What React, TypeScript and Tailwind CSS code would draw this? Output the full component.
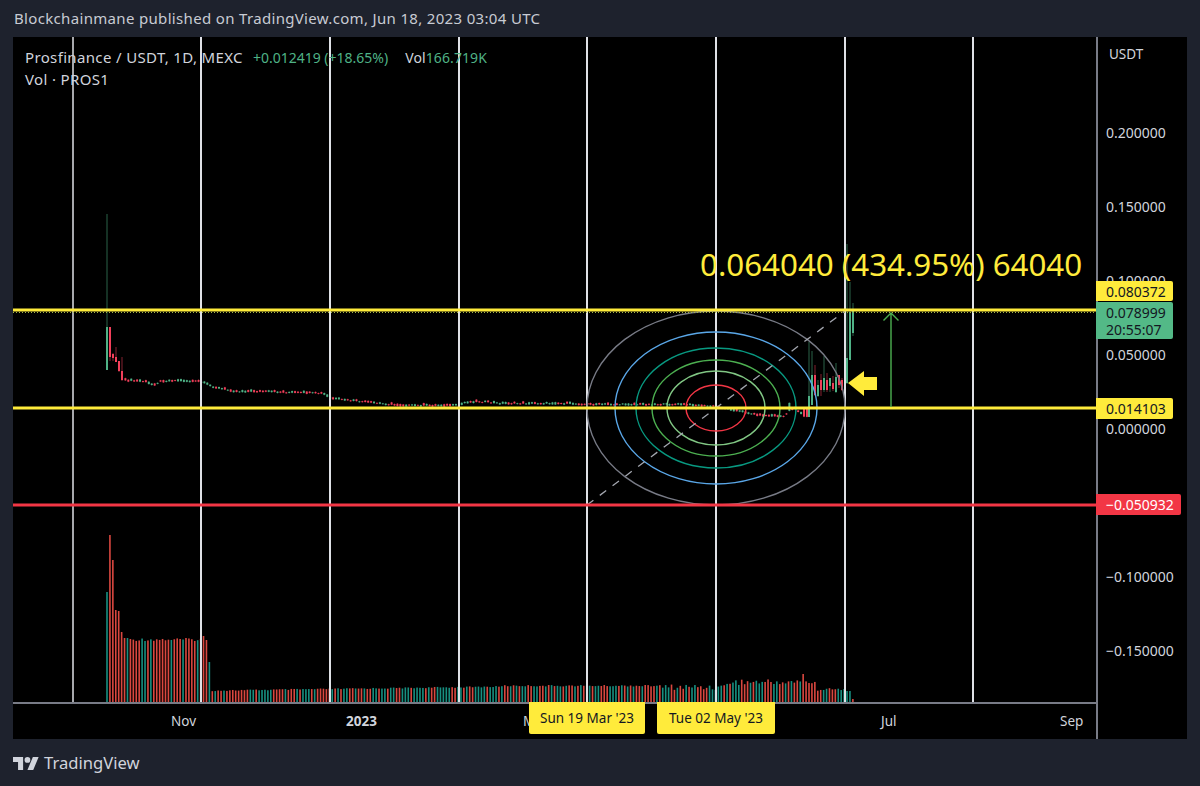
const font = { fontFamily: "'Noto Sans', sans-serif" }

const gridXs = [73, 201, 330, 459, 587, 716, 845, 973]

const priceTicks = [
  { label: '0.200000', y: 133 },
  { label: '0.150000', y: 207 },
  { label: '0.100000', y: 281 },
  { label: '0.050000', y: 355 },
  { label: '0.000000', y: 429 },
  { label: '−0.100000', y: 577 },
  { label: '−0.150000', y: 651 },
]

const ellipses = [
  { rx: 129, ry: 97, stroke: '#787b86' },
  { rx: 101, ry: 76, stroke: '#5aa7e8' },
  { rx: 80, ry: 60, stroke: '#089981' },
  { rx: 64, ry: 48, stroke: '#4caf50' },
  { rx: 49, ry: 37, stroke: '#81c784' },
  { rx: 30, ry: 23, stroke: '#f23645' },
]

const STEP = 2.925
const START = 107

function noise(i: number) {
  const v = Math.sin(i * 12.9898) * 43758.5453
  return v - Math.floor(v)
}

// x, y of the close along the flat part of the chart
const closePath = [
  [125, 381], [145, 382], [150, 385], [155, 385], [160, 382], [175, 381], [190, 382], [200, 382], [207, 385],
  [215, 388], [225, 390], [235, 392], [260, 392], [290, 393], [323, 394], [330, 399], [350, 401], [400, 406],
  [460, 406], [465, 403], [480, 402], [500, 404], [560, 404], [590, 405], [680, 405], [716, 407], [735, 411],
  [760, 416], [785, 417], [790, 410], [795, 409], [806, 418],
]

function closeAt(x: number) {
  for (let i = 1; i < closePath.length; i++) {
    const [x0, y0] = closePath[i - 1]
    const [x1, y1] = closePath[i]
    if (x <= x1) return y0 + ((y1 - y0) * (x - x0)) / (x1 - x0)
  }
  return 417
}

type Candle = { x: number; top: number; bottom: number; high: number; low: number; up: boolean }

const headCandles: Candle[] = [
  { x: 107, top: 327, bottom: 370, high: 214, low: 370, up: true },
  { x: 110, top: 327, bottom: 357, high: 327, low: 361, up: false },
  { x: 113, top: 354, bottom: 358, high: 353, low: 361, up: false },
  { x: 116, top: 357, bottom: 362, high: 347, low: 362, up: false },
  { x: 119, top: 361, bottom: 371, high: 361, low: 372, up: false },
  { x: 122, top: 371, bottom: 380, high: 357, low: 381, up: false },
]

const flatCandles: Candle[] = []
for (let x = 125.4, i = 0; x < 807; x += STEP, i++) {
  const y = closeAt(x) + (noise(i) - 0.5) * 1.2
  const up = noise(i + 300) > 0.6
  const tall = x > 803 || (x > 788 && x < 792)
  const h = tall ? 8 : 0.8 + noise(i + 700) * 1.6
  flatCandles.push({ x, top: y - h, bottom: y, high: y - h - 0.5, low: y + 0.5, up })
}

const tailCandles: Candle[] = [
  { x: 809, top: 396, bottom: 417, high: 342, low: 417, up: true },
  { x: 812, top: 375, bottom: 405, high: 351, low: 405, up: true },
  { x: 815, top: 375, bottom: 395, high: 365, low: 396, up: false },
  { x: 818, top: 385, bottom: 396, high: 380, low: 397, up: true },
  { x: 821, top: 380, bottom: 390, high: 374, low: 396, up: false },
  { x: 824, top: 378, bottom: 390, high: 356, low: 392, up: true },
  { x: 827, top: 380, bottom: 390, high: 373, low: 392, up: false },
  { x: 830, top: 378, bottom: 386, high: 378, low: 392, up: true },
  { x: 833, top: 383, bottom: 389, high: 376, low: 391, up: false },
  { x: 836, top: 377, bottom: 392, high: 363, low: 393, up: true },
  { x: 839, top: 375, bottom: 385, high: 375, low: 388, up: false },
  { x: 842, top: 380, bottom: 390, high: 378, low: 391, up: false },
  { x: 847, top: 358, bottom: 383, high: 244, low: 384, up: true },
  { x: 850, top: 312, bottom: 360, high: 282, low: 360, up: true },
  { x: 853, top: 311, bottom: 333, high: 303, low: 336, up: true },
]

const candles = [...headCandles, ...flatCandles, ...tailCandles]

const headVolume: [number, boolean][] = [
  [592, true], [535, false], [560, false], [610, false], [611, false], [632, false], [638, false], [638, true],
]

// top of a volume bar in page px, read off the picture
const volumeTopAt = (x: number, i: number) => {
  if (x < 203) return 638 + noise(i) * 3
  if (x < 206) return 636
  if (x < 209) return 640
  if (x < 212) return 662
  if (x < 500) return 690 - ((x - 212) / 288) * 4 + noise(i) * 1.2
  if (x < 660) return 685 + noise(i) * 1.5
  if (x < 727) return 684 + noise(i) * 6
  if (x > 801 && x < 805) return 674
  if (x < 815) return 679 + noise(i) * 6
  if (x < 845) return 691 - noise(i) * 3
  if (x < 850) return 691
  return 699
}

const volumeBars: { x: number; top: number; up: boolean }[] = []
for (let i = 0; START + i * STEP < 854; i++) {
  const x = START + i * STEP
  if (i < headVolume.length) volumeBars.push({ x, top: headVolume[i][0], up: headVolume[i][1] })
  else volumeBars.push({ x, top: volumeTopAt(x, i), up: noise(i + 40) > 0.5 })
}

function ChartDrawing() {
  return (
    <svg className="absolute inset-0 block" width={1083} height={665} viewBox="13 37 1083 665">
      {volumeBars.map((b, i) => (
        <rect key={i} x={b.x - 0.8} y={b.top} width={1.6} height={702 - b.top} fill={b.up ? '#178f80' : '#d9473f'} />
      ))}
      {candles.map((c, i) => {
        const col = c.up ? '#4fb286' : '#f23f5a'
        return (
          <g key={i}>
            <line x1={c.x} x2={c.x} y1={c.high} y2={c.low} stroke={col} strokeWidth={1} opacity={0.55} />
            <rect x={c.x - 1} y={c.top} width={2} height={c.bottom - c.top} fill={col} />
          </g>
        )
      })}
      {gridXs.map((x) => (
        <line key={x} x1={x} x2={x} y1={37} y2={702} stroke="#dfe1e6" strokeWidth={x === 73 ? 1.5 : 2} />
      ))}
      {ellipses.map((e) => (
        <ellipse key={e.rx} cx={716} cy={408} rx={e.rx} ry={e.ry} fill="none" stroke={e.stroke} strokeWidth={1.4} />
      ))}
      <line x1={587} y1={505} x2={845} y2={311} stroke="#a3a6af" strokeWidth={1.3} strokeDasharray="8 8" />
      <line x1={13} x2={1096} y1={310} y2={310} stroke="#ffeb3b" strokeWidth={3} />
      <line x1={13} x2={1096} y1={312.5} y2={312.5} stroke="#a9b844" strokeWidth={1} strokeDasharray="1 2" />
      <line x1={13} x2={1096} y1={408} y2={408} stroke="#ffeb3b" strokeWidth={3} />
      <line x1={13} x2={1096} y1={505} y2={505} stroke="#f23645" strokeWidth={3} />
      <polygon points="848,383 864,371 864,377 877,377 877,390 864,390 864,396" fill="#ffeb3b" />
      <path d="M891 407V313M883.5 320.5L891 313L898.5 320.5" fill="none" stroke="#4caf50" strokeWidth={1.4} />
    </svg>
  )
}

function TradingViewLogo() {
  return (
    <svg width={26} height={13} viewBox="0 4 36 18" fill="#d1d4dc">
      <path d="M14 22H7V11H0V4h14v18zM28 22h-8l7.5-18h8L28 22z" />
      <circle cx="20" cy="8" r="4" />
    </svg>
  )
}

export default function App() {
  return (
    <div className="flex h-[786px] w-[1200px] flex-col overflow-hidden bg-[#1e222d] text-[#d1d4dc]" style={font}>
      <div className="flex h-[37px] items-center pl-[14px] text-[15px] leading-none tracking-[0.33px] text-[#c8cbd3]">
        Blockchainmane published on TradingView.com, Jun 18, 2023 03:04 UTC
      </div>

      <div className="mx-[13px] flex h-[702px] bg-black">
        <div className="flex w-[1083px] flex-col">
          <div className="relative h-[665px]">
            <ChartDrawing />
            <div className="absolute left-[12px] top-[11px] flex flex-col gap-[3px] text-[15px] leading-[18px] tracking-[0.35px]">
              <div className="flex items-baseline gap-[10px]">
                <span>Prosfinance / USDT, 1D, MEXC</span>
                <span className="text-[14px] tracking-normal text-[#4fb286]">+0.012419 (+18.65%)</span>
                <span className="ml-[7px] text-[14px] tracking-[0.1px]">
                  Vol<span className="text-[#4fb286]">166.719K</span>
                </span>
              </div>
              <div>Vol · PROS1</div>
            </div>
            <div className="absolute left-[687px] top-[205px] whitespace-nowrap text-[31.3px] leading-[44px] text-[#ffeb3b]">
              0.064040 (434.95%) 64040
            </div>
          </div>
          <div className="relative h-[37px] border-t-2 border-[#787b86] text-[13.5px] text-[#d1d4dc]">
            <span className="absolute left-[158px] top-[7px]">Nov</span>
            <span className="absolute left-[333px] top-[7px] font-bold">2023</span>
            <span className="absolute left-[510px] top-[7px]">M</span>
            <span className="absolute left-[868px] top-[7px]">Jul</span>
            <span className="absolute left-[1047px] top-[7px]">Sep</span>
            <div className="absolute left-[516px] top-[-2px] flex h-[32px] w-[116px] items-center justify-center rounded-b-[2px] bg-[#ffeb3b] text-[#131722]">
              Sun 19 Mar '23
            </div>
            <div className="absolute left-[644px] top-[-2px] flex h-[32px] w-[118px] items-center justify-center rounded-b-[2px] bg-[#ffeb3b] text-[#131722]">
              Tue 02 May '23
            </div>
          </div>
        </div>

        <div className="relative flex-1 border-l-2 border-[#787b86] text-[14px] text-[#d1d4dc]">
          <span className="absolute left-[11px] top-[7px] text-[13.5px]">USDT</span>
          {priceTicks.map((t) => (
            <span key={t.label} className="absolute left-[8px] leading-[18px]" style={{ top: t.y - 37 - 9 }}>
              {t.label}
            </span>
          ))}
          <div className="absolute left-[-2px] top-[244px] flex h-[20px] w-[77px] items-center pl-[10px] rounded-r-[2px] bg-[#ffeb3b] text-[#131722]">
            0.080372
          </div>
          <div className="absolute left-[-2px] top-[265px] flex h-[37px] w-[77px] flex-col justify-center pl-[10px] rounded-r-[2px] bg-[#53b987] leading-[17px] text-[#131722]">
            <span>0.078999</span>
            <span>20:55:07</span>
          </div>
          <div className="absolute left-[-2px] top-[361px] flex h-[21px] w-[77px] items-center pl-[10px] rounded-r-[2px] bg-[#ffeb3b] text-[#131722]">
            0.014103
          </div>
          <div className="absolute left-[-2px] top-[457px] flex h-[21px] w-[85px] items-center pl-[10px] rounded-r-[2px] bg-[#f23645] text-white">
            −0.050932
          </div>
        </div>
      </div>

      <div className="flex flex-1 items-center gap-[5px] pl-[13px] pt-[2px]">
        <TradingViewLogo />
        <span className="text-[16.6px] leading-none text-[#d1d4dc]">TradingView</span>
      </div>
    </div>
  )
}
